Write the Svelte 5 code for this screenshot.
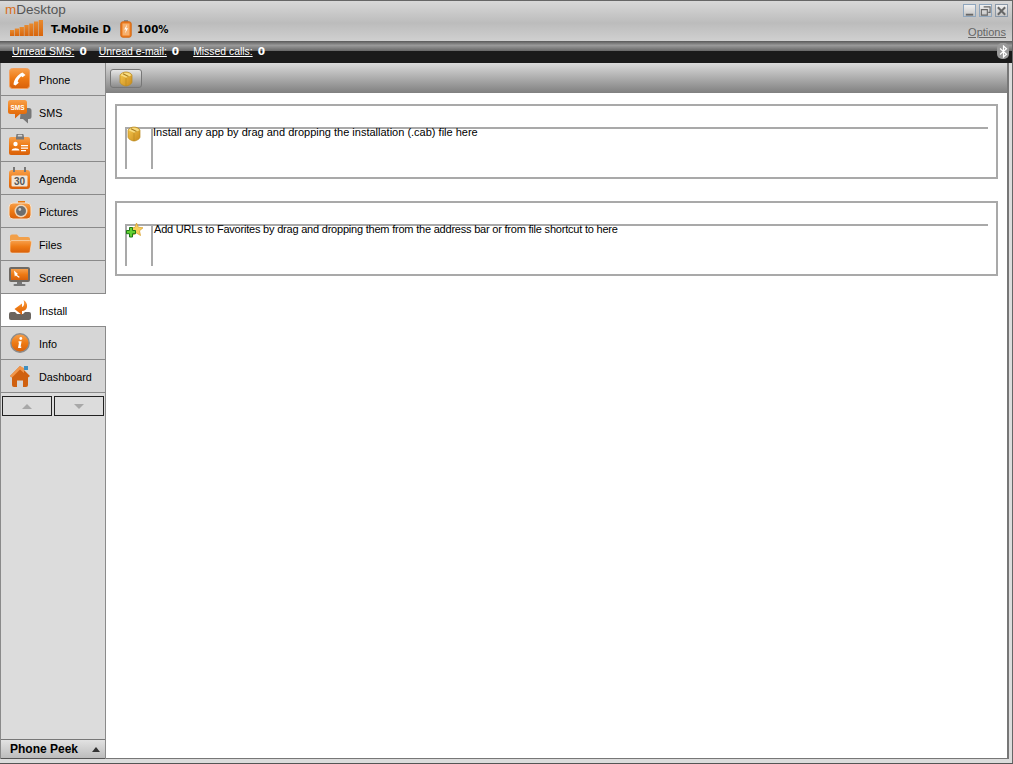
<script>
  const nav = [
    { id: 'phone', label: 'Phone' },
    { id: 'sms', label: 'SMS' },
    { id: 'contacts', label: 'Contacts' },
    { id: 'agenda', label: 'Agenda' },
    { id: 'pictures', label: 'Pictures' },
    { id: 'files', label: 'Files' },
    { id: 'screen', label: 'Screen' },
    { id: 'install', label: 'Install', active: true },
    { id: 'info', label: 'Info' },
    { id: 'dashboard', label: 'Dashboard' }
  ];
</script>

{#snippet box()}
  <svg class="pkg" width="16" height="16" viewBox="0 0 16 16">
    <path d="M8 1C10 1 13 2 14 4V11C14 13 10 15 8 15S2 13 2 11V4C3 2 6 1 8 1Z" fill="url(#gold)" stroke="#b98a20" stroke-width=".7"/>
    <path d="M2.500 4.200C4 2.500 6 1.800 8 1.800S12 2.500 13.500 4.200L8 6.800Z" fill="#f8dc80"/>
    <path d="M8 6.800V15" stroke="#b98a20" stroke-width=".7"/>
    <path d="M5 2.800 10.500 5.500" stroke="#a87c20" stroke-width="1.200"/>
  </svg>
{/snippet}

<svg class="defs" width="0" height="0" aria-hidden="true">
  <defs>
    <linearGradient id="og" x1="0" y1="0" x2="0" y2="1"><stop offset="0" stop-color="#f7a04c"/><stop offset=".5" stop-color="#ee7a14"/><stop offset="1" stop-color="#d8600a"/></linearGradient>
    <linearGradient id="gold" x1="0" y1="0" x2="1" y2="1"><stop offset="0" stop-color="#f6c84e"/><stop offset="1" stop-color="#c98a1c"/></linearGradient>
    <linearGradient id="sig" x1="0" y1="0" x2="0" y2="1"><stop offset="0" stop-color="#e88a2e"/><stop offset="1" stop-color="#d8650c"/></linearGradient>
  </defs>
</svg>

<div class="window">
  <header class="title">
    <div class="brand"><span class="m">m</span>Desktop</div>
    <div class="status">
      <svg class="signal" width="33" height="16" viewBox="0 0 33 16">
        <rect x="0" y="10" width="4.300" height="6" fill="url(#sig)"/>
        <rect x="4.800" y="8.500" width="4.300" height="7.500" fill="url(#sig)"/>
        <rect x="9.600" y="7" width="4.300" height="9" fill="url(#sig)"/>
        <rect x="14.400" y="5" width="4.300" height="11" fill="url(#sig)"/>
        <rect x="19.200" y="3.500" width="4.300" height="12.500" fill="url(#sig)"/>
        <rect x="24" y="1.500" width="4.300" height="14.500" fill="url(#sig)"/>
        <rect x="28.800" y="0" width="4.200" height="16" fill="url(#sig)"/>
      </svg>
      <b class="carrier">T-Mobile D</b>
      <svg class="battery" width="12" height="18" viewBox="0 0 12 18">
        <rect x="4" y="0" width="4" height="2" fill="#888"/>
        <rect x=".8" y="1.800" width="10.400" height="15.400" rx="2" fill="#ee7a1c" stroke="#d06a18" stroke-width="1"/>
        <rect x="2.500" y="3.500" width="7" height="12" fill="#f6b06e"/>
        <path d="M7 4.500 4.200 9.600H6L5 13.600 8 8.200H6.200Z" fill="#fff"/>
      </svg>
      <b class="pct">100%</b>
    </div>
    <div class="controls">
      <div class="btns">
        <span class="wbtn"><svg width="12" height="12" viewBox="0 0 12 12"><rect x="2" y="9" width="8" height="2" fill="#666"/></svg></span>
        <span class="wbtn"><svg width="12" height="12" viewBox="0 0 12 12"><path d="M4 1.500h7v6H9M1.500 4.500h6.500v6h-6.500z" fill="none" stroke="#666" stroke-width="1.200"/></svg></span>
        <span class="wbtn"><svg width="12" height="12" viewBox="0 0 12 12"><path d="M2 2 10 10M10 2 2 10" stroke="#666" stroke-width="2.200"/></svg></span>
      </div>
      <a class="options" href="#options">Options</a>
    </div>
  </header>

  <div class="notify">
    <span class="n"><u>Unread SMS:</u><b>0</b></span>
    <span class="n"><u>Unread e-mail:</u><b>0</b></span>
    <span class="n"><u>Missed calls:</u><b>0</b></span>
    <span class="bt">
      <svg width="9" height="13" viewBox="0 0 9 13"><path d="M1 3.500 7.500 9.200 4.500 12V1L7.500 3.800 1 9.500" fill="none" stroke="#fff" stroke-width="1.200"/></svg>
    </span>
  </div>

  <div class="main">
    <aside class="side">
      <nav>
        {#each nav as item}
          <div class="item" class:active={item.active}>
            <span class="ico">
              {#if item.id === 'phone'}
                <svg width="22" height="22" viewBox="0 0 22 22"><rect x=".5" y=".5" width="20" height="20" rx="3" fill="url(#og)" stroke="#f2a060"/><path d="M4.500 16.500C5 11 9 6.500 13.500 4.500L16.500 7 13.500 9.300 12.300 8.300C10.500 9.800 9.300 11.500 8.700 13.600L9.800 14.800 6.500 17.500Z" fill="#fff"/></svg>
              {:else if item.id === 'sms'}
                <svg width="24" height="24" viewBox="0 0 24 24"><path d="M13 8h8a2.500 2.500 0 0 1 2.500 2.500v6A2.500 2.500 0 0 1 21 19h-1v4.500l-5-4.500h-3z" fill="#777"/><path d="M2.500 0h14A2.500 2.500 0 0 1 19 2.500v9a2.500 2.500 0 0 1-2.500 2.500H12l-5 4.500V14H2.500A2.500 2.500 0 0 1 0 11.500v-9A2.500 2.500 0 0 1 2.500 0z" fill="url(#og)"/><text x="9.500" y="9.500" text-anchor="middle" class="smst">SMS</text></svg>
              {:else if item.id === 'contacts'}
                <svg width="22" height="22" viewBox="0 0 22 22"><path d="M8 3V1.500A1.500 1.500 0 0 1 9.500 0h3A1.500 1.500 0 0 1 14 1.500V3" fill="none" stroke="#777" stroke-width="1.500"/><rect x="0" y="3" width="21" height="18" rx="2" fill="url(#og)"/><rect x="7" y="2.500" width="8" height="3" fill="#777"/><circle cx="6.500" cy="10" r="2.200" fill="#fff"/><path d="M2.500 16.500C3 13.500 10 13.500 10.500 16.500Z" fill="#fff"/><path d="M12 11h7v1.200h-7zM12 13.500h7v1.200h-7zM12 16h5v1.200h-5z" fill="#fff"/></svg>
              {:else if item.id === 'agenda'}
                <svg width="22" height="22" viewBox="0 0 22 22"><rect x="0" y="3" width="21" height="19" rx="3" fill="url(#og)"/><rect x="2.500" y="8.500" width="16" height="11" rx="1" fill="#efe6da"/><path d="M5 0v5M16 0v5" stroke="#777" stroke-width="2"/><text x="10.500" y="18" text-anchor="middle" class="cal">30</text></svg>
              {:else if item.id === 'pictures'}
                <svg width="24" height="20" viewBox="0 0 24 20"><rect x="10" y="0" width="7" height="2.500" fill="#e8780f"/><rect x="1" y="2" width="22" height="16" rx="4" fill="url(#og)" stroke="#f6e2cc"/><circle cx="13" cy="10" r="6.500" fill="#f0d6b8"/><circle cx="13" cy="10" r="5" fill="#6e6e6e"/><circle cx="11.800" cy="8.500" r="1.400" fill="#ccc"/></svg>
              {:else if item.id === 'files'}
                <svg width="23" height="20" viewBox="0 0 23 20"><path d="M1 2.500A2 2 0 0 1 3 .5h5l2 2.500h9a2 2 0 0 1 2 2V8H1z" fill="#f2a04a"/><path d="M3 6.500h17.500a2 2 0 0 1 2 2.300L21 17.500a2 2 0 0 1-2 1.500H3a2 2 0 0 1-2-2V8.500a2 2 0 0 1 2-2z" fill="url(#og)" stroke="#f6e0c8" stroke-width=".6"/></svg>
              {:else if item.id === 'screen'}
                <svg width="22" height="20" viewBox="0 0 22 20"><rect x="0" y="0" width="21" height="15" rx="2" fill="#6f6a64"/><rect x="2" y="2" width="17" height="11" fill="url(#og)"/><path d="M5 3.500 9 7 7.800 7.800 10.800 10 9.800 10.800 6.800 8.600 5.800 9.600Z" fill="#fff"/><rect x="8" y="15" width="5" height="2" fill="#777"/><rect x="4.500" y="17" width="12" height="2" rx="1" fill="#777"/></svg>
              {:else if item.id === 'install'}
                <svg width="22" height="20" viewBox="0 0 22 20"><path d="M2 12h4l2 2h6l2-2h4a2 2 0 0 1 2 2v4a2 2 0 0 1-2 2H2a2 2 0 0 1-2-2v-4a2 2 0 0 1 2-2z" fill="#6b655f"/><path d="M14.500 0C17 1.500 18.500 4 18 7c-.5 2.500-2.500 4-5 4v4L5.500 9 13 3.500V7C15 6.800 15.800 3.500 14.500 0Z" fill="url(#og)"/></svg>
              {:else if item.id === 'info'}
                <svg width="20" height="20" viewBox="0 0 20 20"><circle cx="10" cy="10" r="9.200" fill="url(#og)" stroke="#8c8c8c" stroke-width="1.400"/><circle cx="10.800" cy="5.500" r="1.400" fill="#fff"/><path d="M8.600 8.200h3L10.600 13.800h1L11 15H8L9 9.400H8.300Z" fill="#fff"/></svg>
              {:else}
                <svg width="20" height="22" viewBox="0 0 20 22"><rect x="14" y="1" width="4" height="4" fill="#3f8fc0"/><path d="M10 1 20 11 18 12.500V20a2 2 0 0 1-2 2h-3v-6.500H7V22H4a2 2 0 0 1-2-2v-7.500L0 11Z" fill="#d0600f"/><path d="M10 1 0 11l2 1.500L10 4.500 14 8V3Z" fill="#f2964a"/></svg>
              {/if}
            </span>
            <span class="lab">{item.label}</span>
          </div>
        {/each}
      </nav>
      <div class="arrows">
        <span class="arr"><i class="up"></i></span>
        <span class="arr"><i class="down"></i></span>
      </div>
      <div class="peek"><b>Phone Peek</b><i class="pk"></i></div>
    </aside>

    <section class="content">
      <div class="toolbar">
        <button class="tbtn" aria-label="Install">{@render box()}</button>
      </div>
      <div class="panels">
        <div class="panel">
          <div class="cols">
            <div class="c-ico">{@render box()}</div>
            <div class="c-txt">Install any app by drag and dropping the installation (.cab) file here</div>
          </div>
        </div>
        <div class="panel">
          <div class="cols">
            <div class="c-ico">
              <svg class="pkg" width="17" height="16" viewBox="0 0 17 16">
                <path d="M10.500 0 12.300 4.200 17 4.800 13.500 7.800 14.500 12.500 10.500 10 7 12 7.500 7.500 5 5 9 4.400Z" fill="#f8cf5c" stroke="#d79c26" stroke-width=".7"/>
                <path d="M3.500 4.500h3v3h3v3.200h-3v3.300h-3v-3.300H.5V7.500h3z" fill="#62d030" stroke="#1c7a14"/>
              </svg>
            </div>
            <div class="c-txt narrow">Add URLs to Favorites by drag and dropping them from the address bar or from file shortcut to here</div>
          </div>
        </div>
      </div>
    </section>
  </div>
</div>

<style>
  :global(body) { margin: 0; background: #dcdcdc; }
  .defs { position: absolute; }
  .window {
    width: 1013px; height: 764px; box-sizing: border-box; overflow: hidden;
    display: flex; flex-direction: column;
    font-family: "Liberation Sans", Arial, sans-serif; font-size: 11px; color: #000;
    background: #dcdcdc; border-top: 1px solid #666; border-right: 1px solid #666; border-bottom: 1px solid #555;
  }
  .title {
    height: 40px; flex: none; position: relative; box-sizing: border-box; padding: 0 4px 0 4px;
    display: flex; justify-content: space-between;
    background: linear-gradient(#d8d8d8, #bcbcbc 55%, #d0d0d0);
  }
  .brand { position: absolute; left: 5px; top: 1px; font-size: 13.500px; line-height: 15px; color: #555; }
  .m { color: #d9701c; }
  .status { display: flex; align-items: center; margin: 19px 0 0 6px; height: 19px; }
  .signal { margin-top: -4px; }
  .carrier { margin-left: 8px; font-family: "DejaVu Sans", sans-serif; font-size: 10.200px; }
  .battery { margin-left: 9px; margin-top: -2px; }
  .pct { margin-left: 5px; font-family: "DejaVu Sans", sans-serif; font-size: 10.200px; }
  .controls { display: flex; flex-direction: column; align-items: flex-end; }
  .btns { display: flex; gap: 3px; margin-top: 3px; }
  .wbtn {
    width: 11px; height: 11px; box-sizing: content-box; border: 1px solid #8fa6bd; display: flex; align-items: center; justify-content: center;
    background: linear-gradient(#f0f0f0, #c4c4c4);
  }
  .wbtn:last-child { border-color: #8a98a8; }
  .options { margin-top: 9px; color: #666; font-size: 11px; text-decoration: underline; margin-right: 2px; line-height: 13px; }
  .notify {
    height: 22px; flex: none; box-sizing: border-box; display: flex; align-items: flex-end; gap: 12px; padding: 0 0 5px 12px; position: relative;
    background: linear-gradient(#5a5a5a, #9a9a9a 20%, #666 46%, #1a1a1a 47%, #1a1a1a);
    color: #fff; line-height: 13px;
  }
  .n { display: inline-flex; gap: 5px; font-size: 10.400px; }
  .n:nth-child(3) { margin-left: 2px; }
  .n b { font-family: "DejaVu Sans", sans-serif; font-size: 10.500px; }
  .bt {
    position: absolute; right: 3px; top: 2px; width: 12px; height: 16px; border-radius: 5px; background: #9a9a9a;
    display: flex; align-items: center; justify-content: center;
  }
  .main { flex: 1; display: flex; min-height: 0; padding-bottom: 4px; }
  .side {
    width: 106px; flex: none; box-sizing: border-box; display: flex; flex-direction: column;
    background: #dcdcdc; border-left: 1px solid #8a8a8a; border-right: 1px solid #8a8a8a;
  }
  .item {
    height: 33px; box-sizing: border-box; border-bottom: 1px solid #8a8a8a; background: #d6d6d6;
    display: flex; align-items: center; padding-left: 7px;
  }
  .item.active { background: #fff; margin-right: -1px; position: relative; }
  .ico { width: 24px; height: 24px; display: flex; align-items: center; justify-content: center; flex: none; }
  .lab { margin-left: 7px; font-size: 10.800px; position: relative; top: 1px; }
  .smst { font: bold 6.500px "Liberation Sans", sans-serif; fill: #fff; }
  .cal { font: bold 10px "Liberation Sans", sans-serif; fill: #555; }
  .arrows { display: flex; gap: 2px; padding: 3px 1px 0; }
  .arr {
    width: 50px; height: 20px; box-sizing: border-box; border: 1px solid #222; background: #dcdcdc;
    display: flex; align-items: center; justify-content: center;
  }
  .up { border: 5px solid transparent; border-top: 0; border-bottom: 5px solid #a8a8a8; }
  .down { border: 5px solid transparent; border-bottom: 0; border-top: 5px solid #a8a8a8; }
  .peek {
    margin-top: auto; height: 20px; box-sizing: border-box; border-top: 1px solid #777; border-bottom: 1px solid #555;
    display: flex; align-items: center; justify-content: space-between; padding: 0 5px 0 9px;
    background: linear-gradient(#e2e2e2, #bcbcbc); font-size: 12px;
  }
  .pk { border: 4px solid transparent; border-top: 0; border-bottom: 5px solid #333; }
  .content {
    width: 903px; flex: none; box-sizing: border-box; display: flex; flex-direction: column; background: #fff;
    border-right: 2px solid #777; border-bottom: 1px solid #777;
  }
  .toolbar {
    height: 30px; flex: none; box-sizing: border-box; display: flex; align-items: flex-start; padding: 6px 0 0 4px;
    background: linear-gradient(#dadada, #808080);
  }
  .tbtn {
    width: 32px; height: 19px; padding: 0; border: 1px solid #777; border-radius: 3px; display: flex; align-items: center; justify-content: center;
    background: linear-gradient(#e6e6e6, #b0b0b0 60%, #8c8c8c);
  }
  .panels { display: flex; flex-direction: column; gap: 22px; padding: 11px 9px 0 9px; }
  .panel { height: 75px; box-sizing: border-box; border: 2px solid #a9a9a9; padding: 21px 8px 0 8px; }
  .cols { display: flex; height: 40px; border-top: 2px solid #a9a9a9; }
  .c-ico { width: 24px; flex: none; box-sizing: content-box; border-left: 2px solid #a9a9a9; border-right: 2px solid #a9a9a9; position: relative; }
  .pkg { position: absolute; left: -1px; top: -3px; }
  .tbtn .pkg { position: static; }
  .c-txt { padding-left: 0; line-height: 14px; margin-top: -4px; font-size: 11px; }
  .narrow { padding-left: 1px; letter-spacing: -0.21px; }
</style>
